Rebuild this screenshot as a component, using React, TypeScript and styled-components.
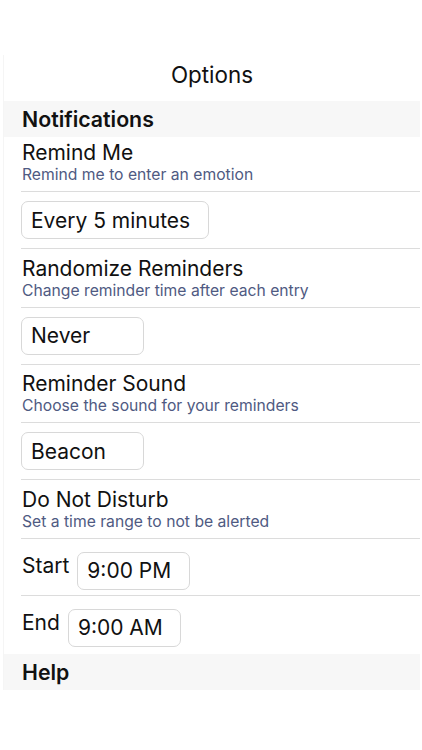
import React from "react";
import styled, { createGlobalStyle } from "styled-components";

const GlobalStyle = createGlobalStyle`
  html, body {
    margin: 0;
    padding: 0;
    background: #fff;
  }
  body {
    font-family: Inter, "Noto Sans", sans-serif;
    color: #111;
    -webkit-font-smoothing: antialiased;
  }
`;

type Setting = {
  title: string;
  subtitle: string;
  value: string;
  width: number;
};

const settings: Setting[] = [
  {
    title: "Remind Me",
    subtitle: "Remind me to enter an emotion",
    value: "Every 5 minutes",
    width: 188,
  },
  {
    title: "Randomize Reminders",
    subtitle: "Change reminder time after each entry",
    value: "Never",
    width: 123,
  },
  {
    title: "Reminder Sound",
    subtitle: "Choose the sound for your reminders",
    value: "Beacon",
    width: 123,
  },
];

const times = [
  { label: "Start", value: "9:00 PM" },
  { label: "End", value: "9:00 AM" },
];

const App: React.FC = () => {
  return (
    <>
      <GlobalStyle />
      <Screen>
        <Panel>
          <Title>Options</Title>
          <SectionHeader>Notifications</SectionHeader>
          <List>
            {settings.map((s, i) => (
              <React.Fragment key={s.title}>
                <TitleRow first={i === 0}>
                  <RowTitle>{s.title}</RowTitle>
                  <RowSubtitle>{s.subtitle}</RowSubtitle>
                </TitleRow>
                <ValueRow>
                  <ValueBox width={s.width}>{s.value}</ValueBox>
                </ValueRow>
              </React.Fragment>
            ))}
            <TitleRow>
              <RowTitle>Do Not Disturb</RowTitle>
              <RowSubtitle>Set a time range to not be alerted</RowSubtitle>
            </TitleRow>
            {times.map((t, i) => (
              <TimeRow key={t.label} last={i === times.length - 1}>
                <TimeLabel>{t.label}</TimeLabel>
                <ValueBox width={113}>{t.value}</ValueBox>
              </TimeRow>
            ))}
          </List>
          <SectionHeader>Help</SectionHeader>
        </Panel>
      </Screen>
    </>
  );
};

const Screen = styled.div`
  width: 422px;
  height: 750px;
  padding-top: 55px;
  box-sizing: border-box;
  background: #fff;
  overflow: hidden;
`;

const Panel = styled.div`
  margin-left: 3px;
  width: 417px;
  border-left: 1px solid #f5f5f5;
  box-sizing: border-box;
`;

const Title = styled.div`
  height: 40px;
  line-height: 40px;
  margin-bottom: 6px;
  text-align: center;
  font-size: 22.4px;
  font-weight: 400;
  color: #111;
`;

const SectionHeader = styled.div`
  height: 36px;
  line-height: 36px;
  padding-left: 18px;
  background: #f7f7f7;
  font-size: 21.3px;
  font-weight: 600;
  color: #111;
`;

const List = styled.div`
  margin-left: 17px;
  display: flex;
  flex-direction: column;
`;

const TitleRow = styled.div<{ first?: boolean }>`
  display: flex;
  flex-direction: column;
  padding: ${(p) => (p.first ? "3px" : "6.5px")} 0 7px 1px;
  border-top: ${(p) => (p.first ? "none" : "1px solid #dcdcdc")};
`;

const RowTitle = styled.div`
  font-size: 21px;
  line-height: 25px;
  color: #111;
`;

const RowSubtitle = styled.div`
  font-size: 15.7px;
  line-height: 19px;
  color: #4f5a82;
`;

const ValueRow = styled.div`
  display: flex;
  padding: 9px 0 9px;
  border-top: 1px solid #dcdcdc;
`;

const ValueBox = styled.div<{ width: number }>`
  width: ${(p) => p.width}px;
  height: 38px;
  box-sizing: border-box;
  padding: 0 9px;
  display: flex;
  align-items: center;
  border: 1px solid #d8d8d8;
  border-radius: 7px;
  font-size: 21px;
  color: #111;
  white-space: nowrap;
`;

const TimeRow = styled.div<{ last?: boolean }>`
  display: flex;
  align-items: flex-start;
  gap: 8px;
  padding: 13px 0 ${(p) => (p.last ? "7px" : "5px")} 1px;
  border-top: 1px solid #dcdcdc;
`;

const TimeLabel = styled.div`
  font-size: 21px;
  line-height: 25px;
  margin-top: 1px;
  color: #111;
`;

export default App;
